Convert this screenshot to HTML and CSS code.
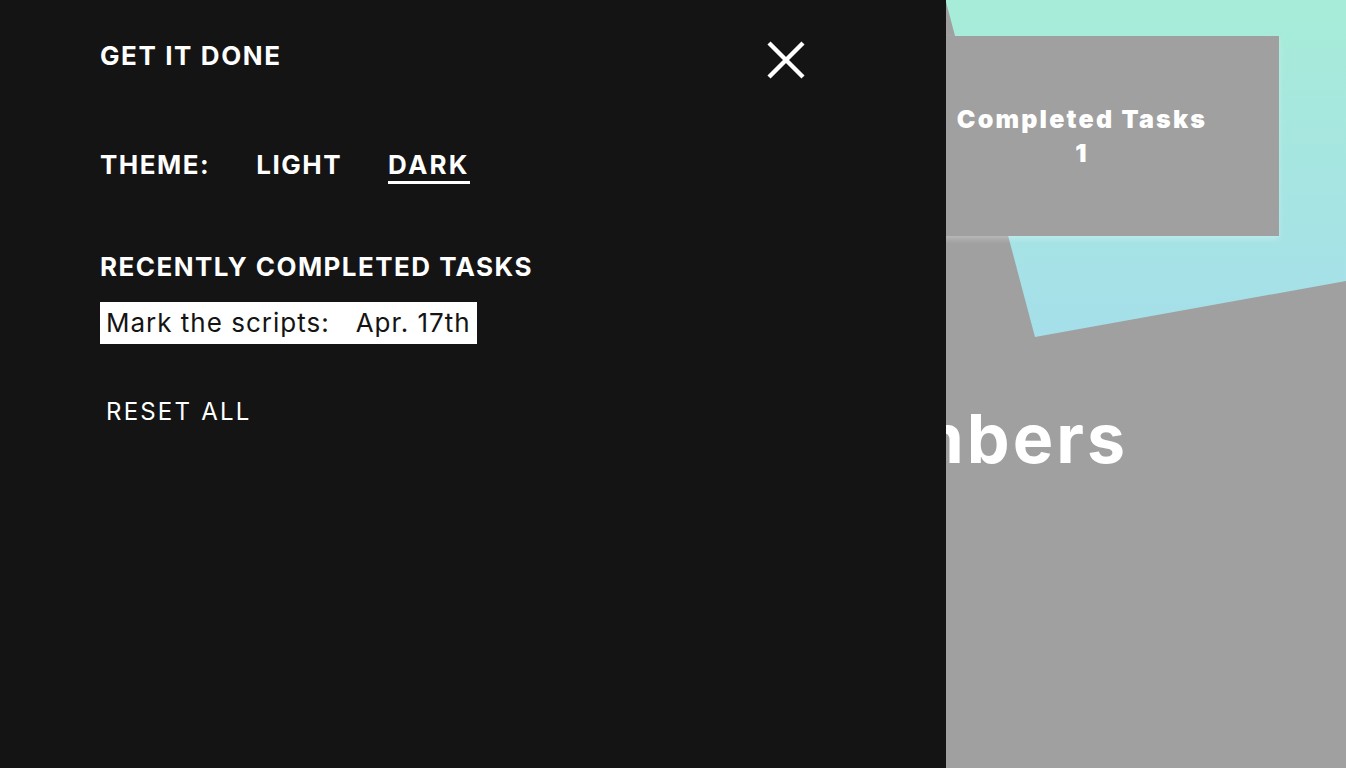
FILE: index.html
```html
<!DOCTYPE html>
<html lang="en">
<head>
<meta charset="utf-8">
<title>Get It Done</title>
<link rel="stylesheet" href="styles.css">
</head>
<body>
  <main class="page">
    <svg class="backdrop" width="1346" height="768" viewBox="0 0 1346 768" aria-hidden="true">
      <defs>
        <linearGradient id="tealGrad" x1="0" y1="0" x2="0" y2="1">
          <stop offset="0" stop-color="#a7ecd8"/>
          <stop offset="1" stop-color="#a5dfea"/>
        </linearGradient>
      </defs>
      <polygon points="945.5,0 1346,0 1346,281 1035,337" fill="url(#tealGrad)"/>
    </svg>
    <section class="stat-card">
      <div class="stat-label">Completed Tasks</div>
      <div class="stat-value">1</div>
    </section>
    <h1 class="headline">Your Numbers</h1>
  </main>

  <aside class="drawer">
    <header class="drawer-header">
      <div class="brand">GET IT DONE</div>
      <button class="close-btn" aria-label="Close">
        <svg width="40" height="40" viewBox="0 0 40 40">
          <path d="M3 3 L37 37 M37 3 L3 37" stroke="#fff" stroke-width="4.4" fill="none"/>
        </svg>
      </button>
    </header>

    <div class="theme-row">
      <span class="theme-label">THEME:</span>
      <button class="theme-opt">LIGHT</button>
      <button class="theme-opt active">DARK</button>
    </div>

    <h2 class="section-title">RECENTLY COMPLETED TASKS</h2>
    <div class="task-list">
      <div class="task-item">
        <span class="task-name">Mark the scripts:</span>
        <span class="task-date">Apr. 17th</span>
      </div>
    </div>

    <button class="reset-btn">RESET ALL</button>
  </aside>
</body>
</html>
```

FILE: styles.css
```css
* { box-sizing: border-box; }

html, body {
  margin: 0;
  padding: 0;
  width: 1346px;
  height: 768px;
  overflow: hidden;
}

body {
  font-family: "Inter", "Liberation Sans", sans-serif;
  background: #a0a0a0;
  position: relative;
}

/* ---------- background page ---------- */
.page {
  position: relative;
  width: 1346px;
  height: 768px;
  background: #a0a0a0;
  display: flex;
  flex-direction: column;
}

.backdrop {
  position: absolute;
  left: 0;
  top: 0;
  z-index: 0;
}

.stat-card {
  position: relative;
  z-index: 1;
  margin: 36px 0 0 885px;
  width: 394px;
  height: 200px;
  background: #a0a0a0;
  box-shadow: 0 3px 6px rgba(255, 255, 255, 0.28);
  display: flex;
  flex-direction: column;
  align-items: center;
  justify-content: center;
  color: #fff;
  font-weight: 900;
  font-size: 25px;
  line-height: 34px;
  letter-spacing: 2.2px;
}

.headline {
  position: relative;
  z-index: 1;
  margin: 162px 0 0 0;
  padding-right: 218px;
  text-align: right;
  color: #fff;
  font-size: 68px;
  line-height: 80px;
  font-weight: 700;
  letter-spacing: 3px;
}

/* ---------- drawer ---------- */
.drawer {
  position: absolute;
  left: 0;
  top: 0;
  z-index: 5;
  width: 946px;
  height: 768px;
  background: #141414;
  color: #fff;
  padding: 40px 140px 0 100px;
  display: flex;
  flex-direction: column;
  align-items: flex-start;
}

.drawer-header {
  width: 100%;
  display: flex;
  justify-content: space-between;
  align-items: flex-start;
}

.brand {
  font-size: 26px;
  line-height: 32px;
  font-weight: 700;
  letter-spacing: 1.6px;
}

.close-btn {
  width: 40px;
  height: 40px;
  padding: 0;
  margin: 0;
  border: 0;
  background: none;
  cursor: pointer;
  display: block;
}
.close-btn svg { display: block; }

.theme-row {
  margin-top: 69px;
  display: flex;
  align-items: flex-start;
  gap: 46px;
  font-size: 26px;
  line-height: 32px;
  font-weight: 700;
  letter-spacing: 1.5px;
}

.theme-opt {
  font: inherit;
  letter-spacing: inherit;
  color: #fff;
  background: none;
  border: 0;
  padding: 0;
  cursor: pointer;
  border-bottom: 3px solid transparent;
}
.theme-opt.active {
  border-bottom-color: #fff;
  letter-spacing: 2.2px;
}

.section-title {
  margin: 67px 0 0 0;
  font-size: 26px;
  line-height: 32px;
  font-weight: 700;
  letter-spacing: 1.45px;
}

.task-list {
  margin-top: 19px;
  display: flex;
  flex-direction: column;
}

.task-item {
  display: flex;
  gap: 26px;
  background: #fff;
  color: #141414;
  padding: 5px 6px;
  font-size: 26px;
  line-height: 32px;
  font-weight: 400;
  letter-spacing: 1px;
}

.reset-btn {
  margin-top: 53px;
  padding: 0 6px;
  border: 0;
  background: none;
  color: #fff;
  font-family: inherit;
  font-size: 24px;
  line-height: 30px;
  font-weight: 400;
  letter-spacing: 2.2px;
  cursor: pointer;
}
```
